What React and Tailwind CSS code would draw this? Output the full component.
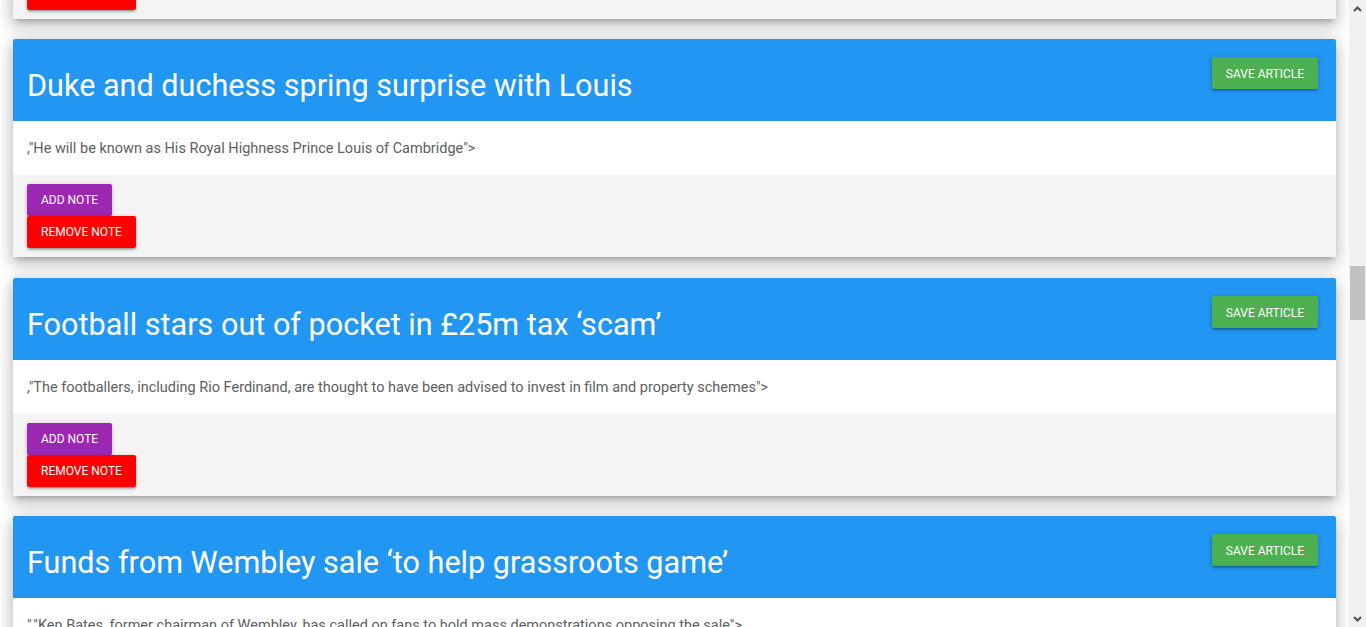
import React from 'react';

const articles = [
  {
    title: 'Duke and duchess spring surprise with Louis',
    summary: ',"He will be known as His Royal Highness Prince Louis of Cambridge">',
  },
  {
    title: 'Duke and duchess spring surprise with Louis',
    summary: ',"He will be known as His Royal Highness Prince Louis of Cambridge">',
  },
  {
    title: 'Football stars out of pocket in £25m tax ‘scam’',
    summary: ',"The footballers, including Rio Ferdinand, are thought to have been advised to invest in film and property schemes">',
  },
  {
    title: 'Funds from Wembley sale ‘to help grassroots game’',
    summary: '","Ken Bates, former chairman of Wembley, has called on fans to hold mass demonstrations opposing the sale">',
  },
];

const btnShadow =
  'shadow-[0_2px_2px_0_rgba(0,0,0,0.14),0_3px_1px_-2px_rgba(0,0,0,0.12),0_1px_5px_0_rgba(0,0,0,0.2)]';

function ArticleCard({ title, summary }) {
  return (
    <div className="bg-white rounded-[2px] shadow-[0_8px_17px_2px_rgba(0,0,0,0.14),0_3px_14px_2px_rgba(0,0,0,0.12),0_5px_5px_-3px_rgba(0,0,0,0.2)]">
      {/* Header */}
      <div className="h-[82px] bg-[#2196f3] rounded-t-[2px] flex items-start justify-between pl-[14px] pr-[18px]">
        <h2 className="pt-[28px] text-[30.6px] leading-[38px] text-white font-normal">{title}</h2>
        <button
          className={`mt-[18px] h-[32px] px-[14px] bg-[#4caf50] text-white text-[12px] leading-[34px] uppercase rounded-[2px] ${btnShadow}`}
        >
          Save Article
        </button>
      </div>

      {/* Summary */}
      <div className="h-[54px] flex items-center px-[14px] pt-[2px]">
        <p className="text-[14.5px] text-[#5e5e5e]">{summary}</p>
      </div>

      {/* Notes */}
      <div className="h-[82px] bg-[#f4f4f4] px-[14px] pt-[9px] flex flex-col items-start">
        <button
          className={`h-[32px] px-[14px] bg-[#9c27b0] text-white text-[12px] uppercase rounded-[2px] ${btnShadow}`}
        >
          Add Note
        </button>
        <button
          className={`h-[32px] px-[14px] bg-[#ff0000] text-white text-[12px] uppercase rounded-[2px] ${btnShadow}`}
        >
          Remove Note
        </button>
      </div>
    </div>
  );
}

function Scrollbar() {
  return (
    <div className="w-[17px] h-[627px] bg-[#f1f1f1] flex flex-col items-center shrink-0">
      <div className="h-[17px] w-full flex items-center justify-center">
        <svg width="9" height="6" viewBox="0 0 9 6">
          <path d="M1 5 L4.5 1.5 L8 5" fill="none" stroke="#505050" strokeWidth="2" />
        </svg>
      </div>
      <div className="h-[249px]" />
      <div className="h-[54px] w-[15px] bg-[#c1c1c1]" />
      <div className="flex-1" />
      <div className="h-[17px] w-full flex items-center justify-center">
        <svg width="9" height="6" viewBox="0 0 9 6">
          <path d="M1 1 L4.5 4.5 L8 1" fill="none" stroke="#505050" strokeWidth="2" />
        </svg>
      </div>
    </div>
  );
}

export default function App() {
  return (
    <div className="flex h-[627px] w-full overflow-hidden bg-white" style={{ fontFamily: 'Roboto, "Liberation Sans", sans-serif' }}>
      <main className="flex-1 h-[627px] overflow-hidden">
        <div className="mt-[-199.5px] mx-[13px] flex flex-col gap-[20.5px]">
          {articles.map((a, i) => (
            <ArticleCard key={i} title={a.title} summary={a.summary} />
          ))}
        </div>
      </main>
      <Scrollbar />
    </div>
  );
}
